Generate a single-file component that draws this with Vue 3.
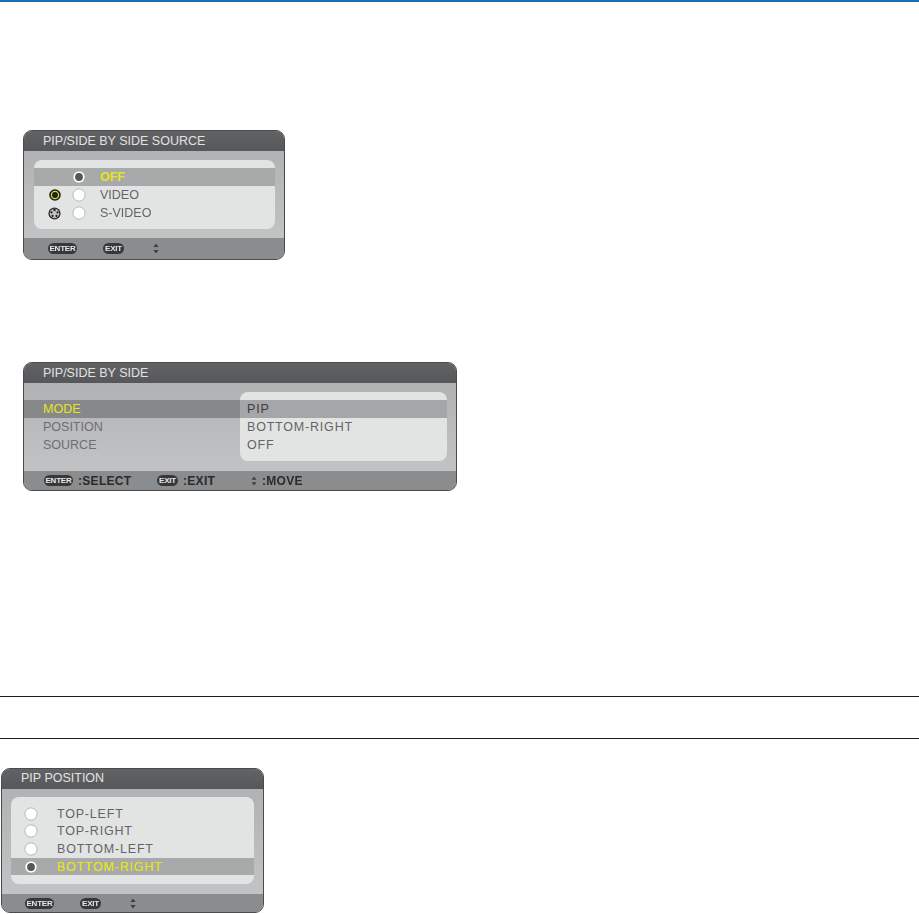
<script setup>
const sourceRows = [
  { label: 'OFF', signal: null, selected: true },
  { label: 'VIDEO', signal: 'video', selected: false },
  { label: 'S-VIDEO', signal: 'svideo', selected: false }
]

const positionRows = [
  { label: 'TOP-LEFT', selected: false },
  { label: 'TOP-RIGHT', selected: false },
  { label: 'BOTTOM-LEFT', selected: false },
  { label: 'BOTTOM-RIGHT', selected: true }
]

const menuRows = [
  { label: 'MODE', value: 'PIP', selected: true },
  { label: 'POSITION', value: 'BOTTOM-RIGHT', selected: false },
  { label: 'SOURCE', value: 'OFF', selected: false }
]
</script>

<template>
  <div class="page">
    <div class="top-bar"></div>

    <!-- source dialog -->
    <section class="osd osd-source">
      <header class="osd-title">PIP/SIDE BY SIDE SOURCE</header>
      <div class="osd-body">
        <ul class="option-list">
          <li
            v-for="row in sourceRows"
            :key="row.label"
            class="option"
            :class="{ selected: row.selected }"
          >
            <span class="signal">
              <svg v-if="row.signal === 'video'" width="12" height="12" viewBox="0 0 11 11">
                <circle cx="5.5" cy="5.5" r="5.3" fill="#1e1e1c" />
                <circle cx="5.5" cy="5.5" r="3.9" fill="#d9d827" />
                <circle cx="5.5" cy="5.5" r="2.7" fill="#1e1e1c" />
              </svg>
              <svg v-else-if="row.signal === 'svideo'" width="13" height="13" viewBox="0 0 12 12">
                <circle cx="6" cy="6" r="5.6" fill="#2b2b2b" />
                <circle cx="6" cy="6" r="4.4" fill="#c4c4c4" />
                <rect x="4.9" y="1.4" width="2.2" height="2.4" fill="#333" />
                <circle cx="3.2" cy="5" r="1" fill="#222" />
                <circle cx="8.8" cy="5" r="1" fill="#222" />
                <circle cx="4.2" cy="8.2" r="1" fill="#222" />
                <circle cx="7.8" cy="8.2" r="1" fill="#222" />
              </svg>
            </span>
            <svg class="radio" width="14" height="14" viewBox="0 0 14 14">
              <circle cx="7" cy="7" r="6.1" fill="#fff" stroke="#a2a3a5" stroke-width="0.7" />
              <circle v-if="row.selected" cx="7" cy="7" r="3.9" fill="#55565a" />
            </svg>
            <span class="option-label">{{ row.label }}</span>
          </li>
        </ul>
      </div>
      <footer class="osd-footer">
        <span class="pill pill-enter">ENTER</span>
        <span class="pill pill-exit">EXIT</span>
        <svg class="updown" width="6" height="11" viewBox="0 0 6 11">
          <path d="M3 0.5 L5.6 4 H0.4 Z M3 10.5 L0.4 7 H5.6 Z" fill="#3d3e40" />
        </svg>
      </footer>
    </section>

    <!-- main pip menu -->
    <section class="osd osd-menu">
      <header class="osd-title">PIP/SIDE BY SIDE</header>
      <div class="osd-body">
        <ul class="menu-labels">
          <li
            v-for="row in menuRows"
            :key="row.label"
            class="menu-label"
            :class="{ selected: row.selected }"
          >{{ row.label }}</li>
        </ul>
        <ul class="menu-values">
          <li
            v-for="row in menuRows"
            :key="row.value"
            class="menu-value"
            :class="{ selected: row.selected }"
          >{{ row.value }}</li>
        </ul>
      </div>
      <footer class="osd-footer">
        <span class="hint hint-enter"><span class="pill pill-enter">ENTER</span>:SELECT</span>
        <span class="hint hint-exit"><span class="pill pill-exit">EXIT</span>:EXIT</span>
        <span class="hint">
          <svg class="updown" width="6" height="10" viewBox="0 0 6 10">
            <path d="M3 0.5 L5.5 3.8 H0.5 Z M3 9.5 L0.5 6.2 H5.5 Z" fill="#3d3e40" />
          </svg>:MOVE
        </span>
      </footer>
    </section>

    <div class="rule-band"></div>

    <!-- position dialog -->
    <section class="osd osd-position">
      <header class="osd-title">PIP POSITION</header>
      <div class="osd-body">
        <ul class="option-list">
          <li
            v-for="row in positionRows"
            :key="row.label"
            class="option"
            :class="{ selected: row.selected }"
          >
            <svg class="radio" width="14" height="14" viewBox="0 0 14 14">
              <circle cx="7" cy="7" r="6.1" fill="#fff" stroke="#a2a3a5" stroke-width="0.7" />
              <circle v-if="row.selected" cx="7" cy="7" r="3.9" fill="#55565a" />
            </svg>
            <span class="option-label">{{ row.label }}</span>
          </li>
        </ul>
      </div>
      <footer class="osd-footer">
        <span class="pill pill-enter">ENTER</span>
        <span class="pill pill-exit">EXIT</span>
        <svg class="updown" width="6" height="11" viewBox="0 0 6 11">
          <path d="M3 0.5 L5.6 4 H0.4 Z M3 10.5 L0.4 7 H5.6 Z" fill="#3d3e40" />
        </svg>
      </footer>
    </section>
  </div>
</template>

<style scoped>
.page {
  width: 919px;
  height: 914px;
  overflow: hidden;
  background: #fff;
  font-family: "Liberation Sans", Arial, sans-serif;
}

.top-bar {
  height: 2px;
  background: #1b6eb7;
}

ul {
  list-style: none;
  margin: 0;
  padding: 0;
}

.osd {
  display: flex;
  flex-direction: column;
  box-sizing: border-box;
  border: 1px solid #4a4b4d;
  border-radius: 9px;
  overflow: hidden;
  background: #bcbdbf;
  filter: blur(0.5px);
}

.osd-title {
  flex: none;
  box-sizing: border-box;
  height: 20px;
  padding-left: 19px;
  background: linear-gradient(#626365, #56575a);
  color: #e2e2e2;
  font-size: 12.5px;
  line-height: 20px;
}

.osd-body {
  flex: 1;
  display: flex;
  background: linear-gradient(#b1b2b4, #c2c3c5);
}

.osd-footer {
  flex: none;
  display: flex;
  align-items: center;
  box-sizing: border-box;
  background: #8b8c8e;
  color: #2a2b2d;
  font-size: 12px;
  font-weight: 700;
  letter-spacing: 0.3px;
}

.pill {
  display: inline-block;
  flex: none;
  box-sizing: border-box;
  height: 11px;
  border-radius: 6px;
  background: #37383a;
  color: #e6e6e6;
  font-size: 8px;
  line-height: 11px;
  font-weight: 700;
  letter-spacing: -0.2px;
  text-align: center;
}

.pill-enter {
  width: 29px;
}

.pill-exit {
  width: 21px;
}

.option-list {
  flex: 1;
  border-radius: 8px;
  background: #e2e4e3;
}

.option {
  display: flex;
  align-items: center;
  height: 18px;
  color: #636466;
  font-size: 12.5px;
}

.option.selected {
  background: #a8a9ab;
  color: #e6e51c;
  font-weight: 700;
}

.signal {
  display: flex;
  justify-content: center;
  flex: none;
}

.radio {
  flex: none;
}

/* source dialog */
.osd-source {
  width: 262px;
  height: 130px;
  margin: 128px 0 0 23px;
}

.osd-source .osd-body {
  padding: 9px 9px 9px 10px;
}

.osd-source .option-list {
  padding: 8px 0 7px;
}

.osd-source .signal {
  width: 13px;
  margin: 0 11px 0 14px;
}

.osd-source .option-label {
  margin-left: 14px;
}

.osd-source .osd-footer {
  height: 21px;
  padding-left: 24px;
}

.osd-source .pill-exit,
.osd-position .pill-exit {
  margin-left: 26px;
}

.osd-source .updown,
.osd-position .updown {
  margin-left: 29px;
}

/* main menu */
.osd-menu {
  width: 434px;
  height: 129px;
  margin: 102px 0 0 23px;
}

.osd-menu .osd-body {
  padding: 9px 9px 10px 0;
}

.menu-labels {
  flex: none;
  width: 216px;
  padding-top: 8px;
}

.menu-label {
  height: 18px;
  padding-left: 19px;
  color: #6d6e70;
  font-size: 12.5px;
  line-height: 19px;
}

.menu-label.selected {
  background: #87888a;
  color: #e6e51c;
}

.menu-values {
  flex: 1;
  padding-top: 8px;
  border-radius: 8px;
  background: #e2e4e3;
}

.menu-value {
  height: 18px;
  padding-left: 7px;
  color: #636466;
  font-size: 12.5px;
  line-height: 18px;
  letter-spacing: 0.8px;
}

.menu-value.selected {
  background: #a5a6a8;
  color: #3c3d3f;
}

.osd-menu .osd-footer {
  height: 19px;
  padding-left: 20px;
}

.hint {
  display: inline-flex;
  align-items: center;
  flex: none;
}

.hint .pill {
  margin-right: 5px;
}

.hint-enter {
  width: 113px;
}

.hint-exit {
  width: 94px;
}

.hint .updown {
  margin-right: 5px;
}

.rule-band {
  box-sizing: border-box;
  height: 43px;
  margin-top: 205px;
  border-top: 1px solid #1c1c1c;
  border-bottom: 1px solid #1c1c1c;
}

/* position dialog */
.osd-position {
  width: 263px;
  height: 145px;
  margin: 29px 0 0 1px;
}

.osd-position .osd-title {
  line-height: 18px;
}

.osd-position .osd-body {
  padding: 8px 9px 10px 9px;
}

.osd-position .option-list {
  padding: 8px 0 8.6px;
}

.osd-position .option {
  height: 17.6px;
}

.osd-position .radio {
  margin-left: 13px;
}

.osd-position .option-label {
  margin-left: 19px;
  letter-spacing: 0.8px;
}

.osd-position .option.selected {
  font-weight: 400;
  text-shadow: 0 0 0.6px #e6e51c;
}

.osd-position .osd-footer {
  height: 18px;
  padding-left: 23px;
}
</style>

<style>
body {
  background: #fff;
}
</style>
